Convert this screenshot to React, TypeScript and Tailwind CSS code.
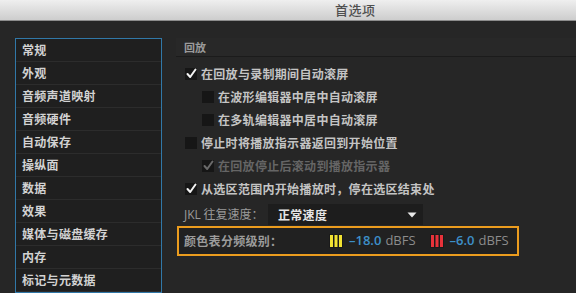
import React from "react";

const cjk = { fontFamily: '"Noto Sans CJK SC", "Noto Sans", sans-serif' };
const latin = { fontFamily: '"Open Sans", "Noto Sans CJK SC", sans-serif' };

function Box({ checked, disabled }: { checked?: boolean; disabled?: boolean }) {
  return (
    <div className="relative w-[12px] h-[12px] bg-[#161616] shrink-0">
      {checked && (
        <svg className="absolute left-[1px] top-[0px]" width="11" height="11" viewBox="0 0 11 11">
          <path
            d="M1.5 6 L4.2 9 L9.5 1.5"
            fill="none"
            stroke={disabled ? "#6a6a6a" : "#f2f2f2"}
            strokeWidth="2"
            strokeLinecap="round"
            strokeLinejoin="round"
          />
        </svg>
      )}
    </div>
  );
}

function Row({
  label,
  checked,
  disabled,
  indent,
}: {
  label: string;
  checked?: boolean;
  disabled?: boolean;
  indent?: boolean;
}) {
  return (
    <div className={`h-[23px] flex items-center gap-[4px] ${indent ? "pl-[26px]" : "pl-[9px]"}`}>
      <Box checked={checked} disabled={disabled} />
      <span
        className={`text-[12px] font-bold tracking-[0.3px] whitespace-nowrap ${disabled ? "text-[#656565]" : "text-[#c4c4c4]"}`}
        style={cjk}
      >
        {label}
      </span>
    </div>
  );
}

function Meter({ color, className }: { color: string; className?: string }) {
  return (
    <svg width="14" height="14" viewBox="0 0 14 14" className={`shrink-0 ${className ?? ""}`}>
      <rect x="0" y="0" width="14" height="14" fill="#1a1a1a" />
      <rect x="1" y="1" width="3" height="12" fill={color} />
      <rect x="5.5" y="1" width="3" height="12" fill={color} />
      <rect x="10" y="1" width="3" height="12" fill={color} />
    </svg>
  );
}

const items = [
  "常规",
  "外观",
  "音频声道映射",
  "音频硬件",
  "自动保存",
  "操纵面",
  "数据",
  "效果",
  "媒体与磁盘缓存",
  "内存",
  "标记与元数据",
];

export default function App() {
  return (
    <div className="w-[576px] h-[293px] overflow-hidden bg-[#262626] flex flex-col">
      <div className="h-[21px] shrink-0 bg-gradient-to-b from-[#efefef] to-[#cdcdcd] border-b border-[#8c8c8c] flex items-center">
        <span className="ml-[335px] text-[13px] text-[#4f4f4f] font-medium tracking-[0.5px]" style={cjk}>
          首选项
        </span>
      </div>
      <div className="flex flex-1 min-h-0">
        <div className="pl-[15px] pt-[17px] shrink-0">
          <div className="w-[147px] border border-[#3178a8] bg-[#1f1f1f]">
            {items.map((t) => (
              <div key={t} className="h-[23px] border-b border-[#2c2c2c] flex items-center pl-[6px]">
                <span className="text-[12px] font-bold text-[#d2d2d2] tracking-[0.3px]" style={cjk}>
                  {t}
                </span>
              </div>
            ))}
          </div>
        </div>
        <div className="flex-1 pt-[17px] pl-[14px]">
          <div className="h-[19px] border-b border-[#1b1b1b] flex items-center pl-[8px] bg-[#282828]">
            <span className="text-[11px] font-bold text-[#9a9a9a]" style={cjk}>
              回放
            </span>
          </div>
          <div className="pt-[5px]">
            <Row label="在回放与录制期间自动滚屏" checked />
            <Row label="在波形编辑器中居中自动滚屏" indent />
            <Row label="在多轨编辑器中居中自动滚屏" indent />
            <Row label="停止时将播放指示器返回到开始位置" />
            <Row label="在回放停止后滚动到播放指示器" checked disabled indent />
            <Row label="从选区范围内开始播放时，停在选区结束处" checked />
          </div>
          <div className="mt-[4px] h-[21px] flex items-center pl-[8px]">
            <span className="w-[84px] text-[12px] text-[#9a9a9a] whitespace-nowrap" style={cjk}>
              <span style={latin}>JKL</span> 往复速度：
            </span>
            <div className="w-[155px] h-[21px] bg-[#1d1d1d] flex items-center justify-between pl-[10px] pr-[6px]">
              <span className="text-[12px] font-bold text-[#e6e6e6] tracking-[0.3px]" style={cjk}>
                正常速度
              </span>
              <svg width="10" height="6" viewBox="0 0 10 6">
                <path d="M0.5 0.5 L9.5 0.5 L5 5.5 Z" fill="#e8e8e8" />
              </svg>
            </div>
          </div>
          <div className="mt-[1px] ml-[1px] w-[342px] h-[30px] border-2 border-[#eb9c1e] bg-[#212121] flex items-center pl-[5px]">
            <span className="w-[145px] text-[12px] font-bold text-[#9c9c9c] tracking-[0.3px] whitespace-nowrap" style={cjk}>
              颜色表分频级别：
            </span>
            <Meter color="#f2e232" />
            <span className="ml-[6px] text-[13px] text-[#3d8fc8] font-semibold" style={latin}>
              –18.0
            </span>
            <span className="ml-[4px] text-[13px] text-[#8c8c8c]" style={latin}>
              dBFS
            </span>
            <Meter color="#e8323a" className="ml-[14px]" />
            <span className="ml-[6px] text-[13px] text-[#3d8fc8] font-semibold" style={latin}>
              –6.0
            </span>
            <span className="ml-[4px] text-[13px] text-[#8c8c8c]" style={latin}>
              dBFS
            </span>
          </div>
        </div>
      </div>
    </div>
  );
}
